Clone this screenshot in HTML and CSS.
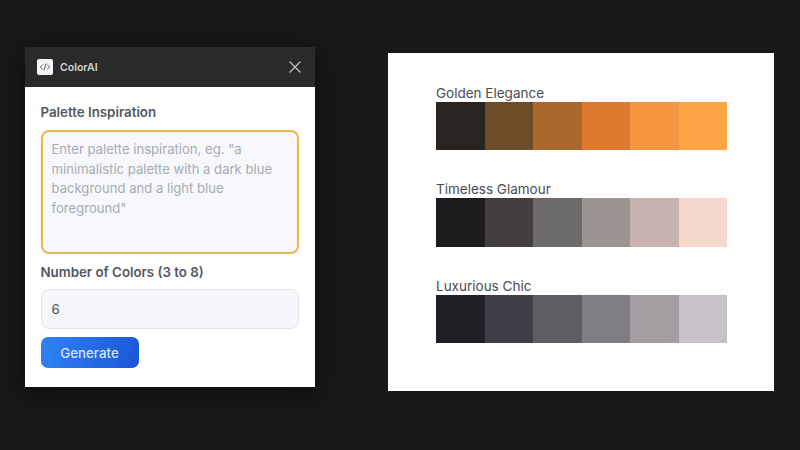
FILE: index.html
```html
<!DOCTYPE html>
<html lang="en">

<head>
    <meta charset="UTF-8">
    <meta name="viewport" content="width=device-width, initial-scale=1.0">
    <title>ColorAI</title>
    <link rel="stylesheet" href="styles.css">
</head>

<body>

    <section class="plugin">
        <header class="plugin-header">
            <div class="plugin-logo">
                <svg width="16" height="16" viewBox="0 0 16 16" fill="none" stroke="#666" stroke-width="1" stroke-linecap="round" stroke-linejoin="round">
                    <path d="M5.5 5.8 3.3 8l2.2 2.2"></path>
                    <path d="M10.5 5.8 12.7 8l-2.2 2.2"></path>
                    <path d="M9 4.8 7 11.2"></path>
                </svg>
            </div>
            <span class="plugin-name">ColorAI</span>
            <svg class="close-icon" width="14" height="14" viewBox="0 0 14 14" fill="none" stroke="#bdbdbd" stroke-width="1.4" stroke-linecap="round">
                <path d="M2 2 12 12"></path>
                <path d="M12 2 2 12"></path>
            </svg>
        </header>

        <div class="plugin-body">
            <label class="field-label" for="inspiration">Palette Inspiration</label>
            <textarea class="inspiration-input" id="inspiration" placeholder='Enter palette inspiration, eg. "a minimalistic palette with a dark blue background and a light blue foreground"'></textarea>

            <label class="field-label count-label" for="count">Number of Colors (3 to 8)</label>
            <input class="count-input" id="count" type="text" value="6">

            <button class="generate-btn">Generate</button>
        </div>
    </section>

    <section class="canvas-card">
        <div class="palette">
            <h2>Golden Elegance</h2>
            <div class="swatches">
                <div style="background-color: #2a2420"></div>
                <div style="background-color: #6c4d28"></div>
                <div style="background-color: #a9692d"></div>
                <div style="background-color: #de7a30"></div>
                <div style="background-color: #f3963f"></div>
                <div style="background-color: #fea546"></div>
            </div>
        </div>

        <div class="palette">
            <h2>Timeless Glamour</h2>
            <div class="swatches">
                <div style="background-color: #1c1c1e"></div>
                <div style="background-color: #433f3f"></div>
                <div style="background-color: #6c6a6a"></div>
                <div style="background-color: #9c9490"></div>
                <div style="background-color: #c8b3ae"></div>
                <div style="background-color: #f5d8cd"></div>
            </div>
        </div>

        <div class="palette">
            <h2>Luxurious Chic</h2>
            <div class="swatches">
                <div style="background-color: #201f23"></div>
                <div style="background-color: #403e48"></div>
                <div style="background-color: #605e63"></div>
                <div style="background-color: #817e83"></div>
                <div style="background-color: #a49ea3"></div>
                <div style="background-color: #c7c1c8"></div>
            </div>
        </div>
    </section>

</body>

</html>
```

FILE: styles.css
```css
html,
body {
    height: 100%;
}

body {
    font-family: 'Inter', 'Liberation Sans', sans-serif;
    margin: 0;
    padding: 47px 0 0 25px;
    box-sizing: border-box;
    width: 800px;
    height: 450px;
    overflow: hidden;
    display: flex;
    align-items: flex-start;
    gap: 73px;
    background-color: #18181a;
    color: #333;
}

.plugin {
    width: 290px;
    height: 340px;
    background-color: #fff;
    box-shadow: 0 6px 24px rgba(0, 0, 0, 0.5);
}

.plugin-header {
    height: 40px;
    padding: 0 13px 0 12px;
    box-sizing: border-box;
    display: flex;
    align-items: center;
    background-color: #2a2a2a;
}

.plugin-logo {
    width: 16px;
    height: 16px;
    margin-right: 7px;
    display: flex;
    border-radius: 2px;
    background-color: #f4f4f4;
}

.plugin-name {
    flex: 1;
    font-size: 10.5px;
    font-weight: 600;
    color: #d6d6d6;
}

.plugin-body {
    padding: 18px 16px 0 15.5px;
    display: flex;
    flex-direction: column;
    align-items: flex-start;
}

.field-label {
    font-size: 13.3px;
    line-height: 15px;
    font-weight: 600;
    color: #54575e;
}

.inspiration-input {
    width: 258.5px;
    height: 124px;
    margin-top: 10px;
    padding: 8px 9px;
    box-sizing: border-box;
    resize: none;
    border: 2px solid #ecb64e;
    border-radius: 8px;
    outline: none;
    background-color: #f6f8fb;
    font-family: inherit;
    font-size: 13.1px;
    line-height: 19.5px;
}

.inspiration-input::placeholder {
    color: #a8abb2;
    opacity: 1;
}

.count-label {
    margin-top: 11px;
}

.count-input {
    width: 258.5px;
    height: 40px;
    margin-top: 9px;
    padding: 0 10px;
    box-sizing: border-box;
    border: 1px solid #e3e5e9;
    border-radius: 8px;
    outline: none;
    background-color: #f6f7fa;
    font-family: inherit;
    font-size: 13.3px;
    color: #4b4d52;
}

.generate-btn {
    width: 98px;
    height: 31px;
    margin-top: 8px;
    padding: 0;
    border: none;
    border-radius: 7px;
    background: linear-gradient(100deg, #2f83f3, #1b56d8);
    font-family: inherit;
    font-size: 13.3px;
    font-weight: 500;
    color: #d5e4fb;
    cursor: pointer;
}

.canvas-card {
    width: 386px;
    height: 338px;
    margin-top: 6px;
    padding: 31.9px 47px 0 48px;
    box-sizing: border-box;
    display: flex;
    flex-direction: column;
    gap: 31.05px;
    background-color: #fefefe;
}

.palette h2 {
    margin: 0;
    font-size: 13.5px;
    line-height: 17px;
    font-weight: 400;
    color: #4a4c50;
}

.swatches {
    height: 48.5px;
    display: flex;
}

.swatches div {
    flex: 1;
}
```
